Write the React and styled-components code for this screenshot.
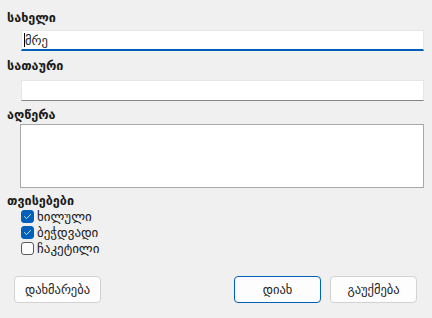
import React from "react";
import styled, { createGlobalStyle } from "styled-components";

const Global = createGlobalStyle`
  html, body { margin: 0; padding: 0; background: #f0f0f0; }
  body { font-family: "DejaVu Sans", "Noto Sans", sans-serif; }
`;

const Dialog = styled.div`
  width: 432px;
  height: 318px;
  box-sizing: border-box;
  padding: 10px 8px 0 7px;
  display: flex;
  flex-direction: column;
  background: #f0f0f0;
  color: #1b1b1b;
`;

const Label = styled.div`
  font-size: 12.6px;
  font-weight: bold;
  line-height: ${(p) => p.$lh || 16}px;
  margin-top: ${(p) => p.$mt || 0}px;
  margin-bottom: ${(p) => p.$mb || 0}px;
`;

const Input = styled.div`
  margin-left: 14px;
  height: 21px;
  box-sizing: border-box;
  background: #fff;
  border: 1px solid #e6e6e6;
  border-bottom: ${(p) => (p.$focused ? "2px solid #005fb8" : "1px solid #868686")};
  display: flex;
  align-items: center;
  padding-left: 2px;
  font-size: 12.5px;
  color: #222;
`;

const Caret = styled.span`
  display: inline-block;
  width: 1px;
  height: 14px;
  background: #000;
`;

const TextArea = styled.div`
  margin-left: 13px;
  height: 64px;
  box-sizing: border-box;
  background: #fff;
  border: 1px solid #a8a8a8;
`;

const CheckList = styled.div`
  display: flex;
  flex-direction: column;
  padding-left: 14px;
`;

const CheckRow = styled.label`
  display: flex;
  align-items: center;
  height: 16px;
  gap: 3px;
  font-size: 13px;
`;

const Box = styled.span`
  width: 13px;
  height: 13px;
  box-sizing: border-box;
  border-radius: 3px;
  display: flex;
  align-items: center;
  justify-content: center;
  background: ${(p) => (p.$checked ? "#005fb8" : "#fcfcfc")};
  border: 1px solid ${(p) => (p.$checked ? "#005fb8" : "#5a5a5a")};
`;

const Buttons = styled.div`
  display: flex;
  margin-top: 20px;
  padding-left: 7px;
  padding-right: 7px;
`;

const Button = styled.button`
  width: 87px;
  height: 27px;
  box-sizing: border-box;
  border-radius: 4px;
  background: #fdfdfd;
  border: 1px solid ${(p) => (p.$primary ? "#005fb8" : "#d2d2d2")};
  font-family: "DejaVu Sans", sans-serif;
  font-size: 12.5px;
  color: #1b1b1b;
  padding: 0;
  margin-left: ${(p) => (p.$push ? "auto" : p.$ml ? p.$ml + "px" : "0")};
`;

const Check = () => (
  <svg width="9" height="9" viewBox="0 0 9 9">
    <path d="M1.5 4.6 L3.6 6.6 L7.6 2.4" fill="none" stroke="#cfe3f7" strokeWidth="1" strokeLinecap="round" strokeLinejoin="round" />
  </svg>
);

const items = [
  { label: "ხილული", checked: true },
  { label: "ბეჭდვადი", checked: true },
  { label: "ჩაკეტილი", checked: false },
];

export default function App() {
  return (
    <>
      <Global />
      <Dialog>
        <Label $mb={4}>სახელი</Label>
        <Input $focused>
          <Caret />
          მრე
        </Input>
        <Label $mt={7} $mb={6}>სათაური</Label>
        <Input />
        <Label $mt={6} $mb={1}>აღწერა</Label>
        <TextArea />
        <Label $mt={6} $lh={14}>თვისებები</Label>
        <CheckList>
          {items.map((it) => (
            <CheckRow key={it.label}>
              <Box $checked={it.checked}>{it.checked && <Check />}</Box>
              {it.label}
            </CheckRow>
          ))}
        </CheckList>
        <Buttons>
          <Button>დახმარება</Button>
          <Button $primary $push>დიახ</Button>
          <Button $ml={9}>გაუქმება</Button>
        </Buttons>
      </Dialog>
    </>
  );
}
